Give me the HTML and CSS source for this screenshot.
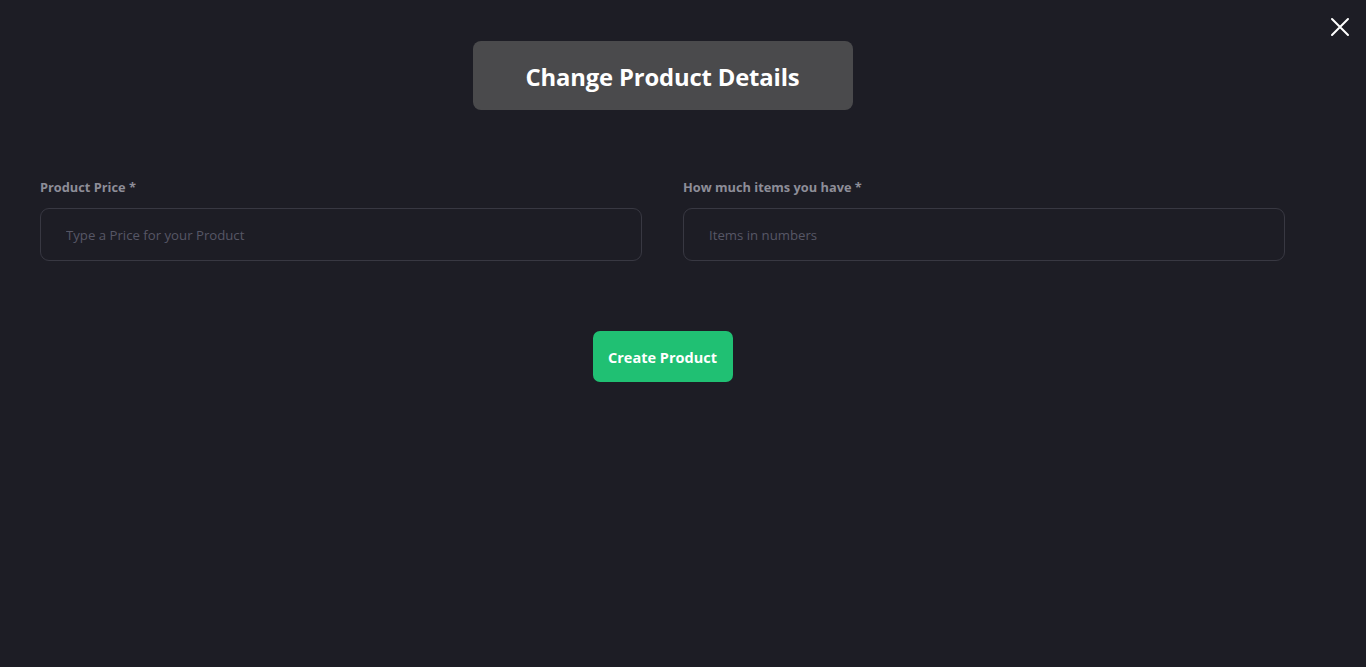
FILE: index.html
```html
<!DOCTYPE html>
<html lang="en">
<head>
<meta charset="utf-8">
<title>Change Product Details</title>
<link rel="stylesheet" href="styles.css">
</head>
<body>
<button class="close" aria-label="Close">
  <svg width="20" height="20" viewBox="0 0 20 20"><path d="M2 2 L18 18 M18 2 L2 18" stroke="#ffffff" stroke-width="2" stroke-linecap="round"/></svg>
</button>
<main class="page">
  <div class="title-wrap"><h1 class="title">Change Product Details</h1></div>
  <div class="fields">
    <div class="field">
      <label class="label">Product Price *</label>
      <input class="input" type="text" placeholder="Type a Price for your Product">
    </div>
    <div class="field">
      <label class="label">How much items you have *</label>
      <input class="input" type="text" placeholder="Items in numbers">
    </div>
  </div>
  <div class="actions"><button class="submit">Create Product</button></div>
</main>
</body>
</html>
```
FILE: styles.css
```css
html, body { margin: 0; padding: 0; }
body {
  background: #1d1d25;
  font-family: "Open Sans", "Noto Sans", sans-serif;
  width: 1366px;
  height: 667px;
  overflow: hidden;
  position: relative;
}
.close {
  position: absolute;
  top: 17px;
  left: 1330px;
  width: 20px;
  height: 20px;
  padding: 0;
  border: 0;
  background: none;
  display: flex;
}
.page {
  width: 1245px;
  margin-left: 40px;
  padding-top: 41px;
}
.title-wrap { display: flex; justify-content: center; }
.title {
  margin: 0;
  width: 380px;
  height: 69px;
  box-sizing: border-box;
  padding-top: 2px;
  display: flex;
  align-items: center;
  justify-content: center;
  background: #4a4a4c;
  border-radius: 8px;
  color: #ffffff;
  font-size: 23.8px;
  font-weight: 700;
  letter-spacing: -0.15px;
}
.fields {
  display: grid;
  grid-template-columns: 602px 602px;
  column-gap: 41px;
  margin-top: 68px;
}
.field { display: flex; flex-direction: column; }
.label {
  color: #8d8d98;
  font-size: 12.8px;
  font-weight: 700;
  line-height: 18px;
  margin-bottom: 12px;
}
.input {
  height: 53px;
  box-sizing: border-box;
  border: 1px solid #383842;
  border-radius: 9px;
  background: transparent;
  padding: 0 25px;
  font-family: inherit;
  font-size: 13.2px;
  color: #ccc;
  outline: none;
}
.input::placeholder { color: #575766; }
.actions { display: flex; justify-content: center; margin-top: 70px; }
.submit {
  width: 140px;
  height: 51px;
  border: 0;
  border-radius: 7px;
  background: #20c073;
  color: #ffffff;
  font-family: inherit;
  font-size: 14.5px;
  font-weight: 700;
  padding: 1px 0 0;
}
```
